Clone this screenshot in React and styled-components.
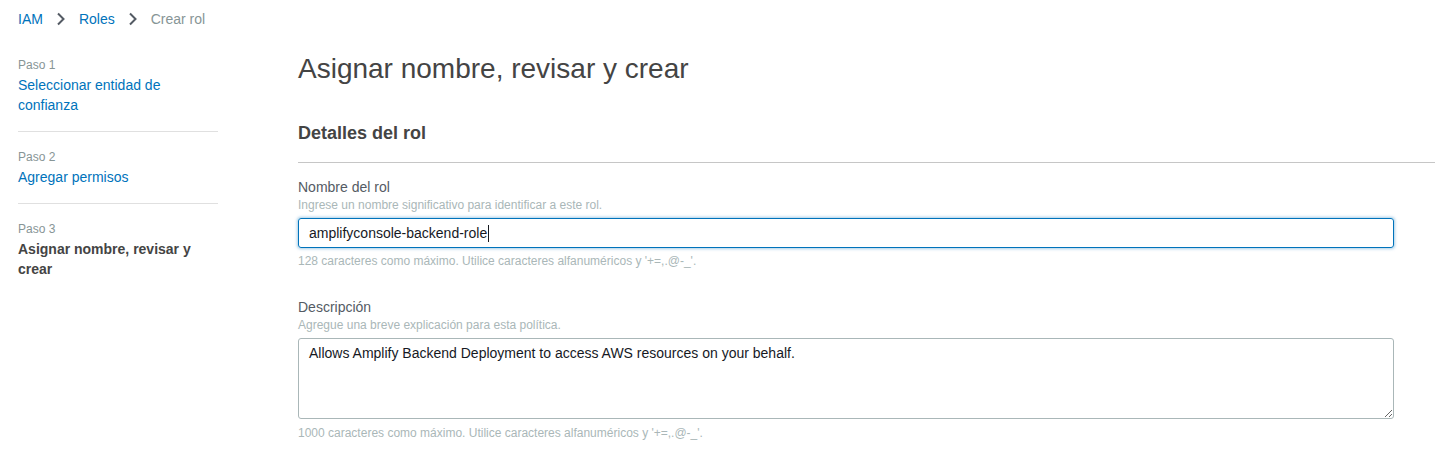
import React from 'react';
import styled, { createGlobalStyle } from 'styled-components';

const GlobalStyle = createGlobalStyle`
  body {
    margin: 0;
    background: #ffffff;
    font-family: "Liberation Sans", Arial, sans-serif;
    color: #444444;
  }
  * { box-sizing: border-box; }
`;

const Page = styled.div`
  width: 1435px;
  min-height: 473px;
  padding-left: 18px;
`;

const Breadcrumbs = styled.nav`
  display: flex;
  align-items: center;
  height: 38px;
  font-size: 14px;
`;

const Crumb = styled.a`
  color: ${(p) => (p.$current ? '#879596' : '#0073bb')};
  text-decoration: none;
`;

const Chevron = styled.span`
  display: inline-flex;
  margin: 0 13px;
`;

const Layout = styled.div`
  display: flex;
  gap: 80px;
`;

const Steps = styled.ol`
  list-style: none;
  margin: 0;
  padding: 19px 0 0;
  width: 200px;
  flex-shrink: 0;
`;

const Step = styled.li`
  padding: 17px 0 16px;
  border-bottom: 1px solid #e0e0e0;
  &:first-child { padding-top: 0; }
  &:last-child { border-bottom: none; }
`;

const StepNumber = styled.div`
  font-size: 12px;
  line-height: 16px;
  color: #879596;
`;

const StepTitle = styled.div`
  font-size: 14px;
  line-height: 20px;
  margin-top: 2px;
  color: ${(p) => (p.$active ? '#444444' : '#0073bb')};
  font-weight: ${(p) => (p.$active ? 700 : 400)};
`;

const Main = styled.main`
  flex: 1;
`;

const Title = styled.h1`
  margin: 13px 0 0;
  font-size: 28px;
  line-height: 36px;
  font-weight: 400;
  color: #444444;
`;

const SectionHeader = styled.h2`
  margin: 34px 0 0;
  padding-bottom: 17px;
  font-size: 18px;
  line-height: 24px;
  font-weight: 700;
  color: #444444;
  border-bottom: 1px solid #c6c6c6;
`;

const Fields = styled.div`
  padding-top: 14px;
  width: 1096px;
  display: flex;
  flex-direction: column;
  gap: 28px;
`;

const Field = styled.div`
  display: flex;
  flex-direction: column;
`;

const Label = styled.label`
  font-size: 14px;
  line-height: 20px;
  color: #545b64;
`;

const Hint = styled.div`
  font-size: 12px;
  line-height: 16px;
  color: #aab7b8;
  margin-bottom: ${(p) => p.$below || 0}px;
  margin-top: ${(p) => p.$above || 0}px;
`;

const InputBox = styled.div`
  height: 30px;
  border: 1px solid #0073bb;
  border-radius: 3px;
  box-shadow: 0 0 3px 1px rgba(0, 115, 187, 0.35);
  padding: 0 10px;
  display: flex;
  align-items: center;
  font-size: 14px;
  color: #16191f;
`;

const Caret = styled.span`
  display: inline-block;
  width: 1px;
  height: 17px;
  background: #16191f;
  margin-left: 1px;
`;

const TextArea = styled.textarea`
  height: 81px;
  border: 1px solid #aab7b8;
  border-radius: 3px;
  padding: 4px 10px;
  font-family: "Liberation Sans", Arial, sans-serif;
  font-size: 14px;
  line-height: 20px;
  color: #16191f;
  outline: none;
  resize: vertical;
`;

const ChevronIcon = () => (
  <svg width="10" height="14" viewBox="0 0 10 14" fill="none">
    <path d="M2 1.5 L7.5 7 L2 12.5" stroke="#545b64" strokeWidth="2" />
  </svg>
);

const steps = [
  { n: 'Paso 1', t: 'Seleccionar entidad de confianza' },
  { n: 'Paso 2', t: 'Agregar permisos' },
  { n: 'Paso 3', t: 'Asignar nombre, revisar y crear', active: true },
];

export default function App() {
  return (
    <Page>
      <GlobalStyle />
      <Breadcrumbs>
        <Crumb href="#">IAM</Crumb>
        <Chevron><ChevronIcon /></Chevron>
        <Crumb href="#">Roles</Crumb>
        <Chevron><ChevronIcon /></Chevron>
        <Crumb $current>Crear rol</Crumb>
      </Breadcrumbs>
      <Layout>
        <Steps>
          {steps.map((s) => (
            <Step key={s.n}>
              <StepNumber>{s.n}</StepNumber>
              <StepTitle $active={s.active}>{s.t}</StepTitle>
            </Step>
          ))}
        </Steps>
        <Main>
          <Title>Asignar nombre, revisar y crear</Title>
          <SectionHeader>Detalles del rol</SectionHeader>
          <Fields>
            <Field>
              <Label>Nombre del rol</Label>
              <Hint $below={5}>Ingrese un nombre significativo para identificar a este rol.</Hint>
              <InputBox>
                amplifyconsole-backend-role
                <Caret />
              </InputBox>
              <Hint $above={5}>128 caracteres como máximo. Utilice caracteres alfanuméricos y '+=,.@-_'.</Hint>
            </Field>
            <Field>
              <Label>Descripción</Label>
              <Hint $below={5}>Agregue una breve explicación para esta política.</Hint>
              <TextArea
                readOnly
                defaultValue="Allows Amplify Backend Deployment to access AWS resources on your behalf."
              />
              <Hint $above={6}>1000 caracteres como máximo. Utilice caracteres alfanuméricos y '+=,.@-_'.</Hint>
            </Field>
          </Fields>
        </Main>
      </Layout>
    </Page>
  );
}
